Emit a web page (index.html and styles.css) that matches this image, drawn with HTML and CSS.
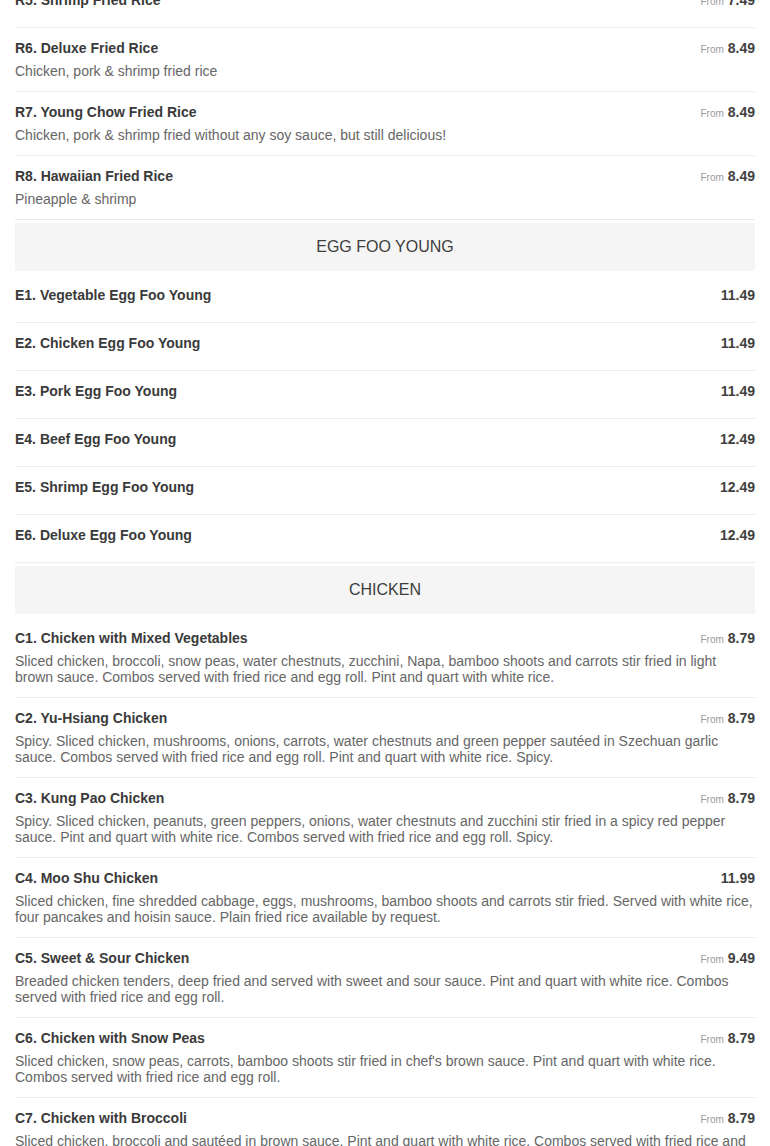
FILE: index.html
```html
<!DOCTYPE html>
<html lang="en">
<head>
<meta charset="utf-8">
<title>Menu</title>
<link rel="stylesheet" href="styles.css">
</head>
<body>
<div class="menu">
  <section class="section">
    <div class="item">
      <div class="row"><span class="name">R5. Shrimp Fried Rice</span><span class="price"><span class="from">From</span> 7.49</span></div>
    </div>
    <div class="item">
      <div class="row"><span class="name">R6. Deluxe Fried Rice</span><span class="price"><span class="from">From</span> 8.49</span></div>
      <p class="desc">Chicken, pork &amp; shrimp fried rice</p>
    </div>
    <div class="item">
      <div class="row"><span class="name">R7. Young Chow Fried Rice</span><span class="price"><span class="from">From</span> 8.49</span></div>
      <p class="desc">Chicken, pork &amp; shrimp fried without any soy sauce, but still delicious!</p>
    </div>
    <div class="item">
      <div class="row"><span class="name">R8. Hawaiian Fried Rice</span><span class="price"><span class="from">From</span> 8.49</span></div>
      <p class="desc">Pineapple &amp; shrimp</p>
    </div>
  </section>

  <section class="section">
    <h2 class="section-title">EGG FOO YOUNG</h2>
    <div class="item"><div class="row"><span class="name">E1. Vegetable Egg Foo Young</span><span class="price">11.49</span></div></div>
    <div class="item"><div class="row"><span class="name">E2. Chicken Egg Foo Young</span><span class="price">11.49</span></div></div>
    <div class="item"><div class="row"><span class="name">E3. Pork Egg Foo Young</span><span class="price">11.49</span></div></div>
    <div class="item"><div class="row"><span class="name">E4. Beef Egg Foo Young</span><span class="price">12.49</span></div></div>
    <div class="item"><div class="row"><span class="name">E5. Shrimp Egg Foo Young</span><span class="price">12.49</span></div></div>
    <div class="item"><div class="row"><span class="name">E6. Deluxe Egg Foo Young</span><span class="price">12.49</span></div></div>
  </section>

  <section class="section">
    <h2 class="section-title">CHICKEN</h2>
    <div class="item">
      <div class="row"><span class="name">C1. Chicken with Mixed Vegetables</span><span class="price"><span class="from">From</span> 8.79</span></div>
      <p class="desc">Sliced chicken, broccoli, snow peas, water chestnuts, zucchini, Napa, bamboo shoots and carrots stir fried in light brown sauce. Combos served with fried rice and egg roll. Pint and quart with white rice.</p>
    </div>
    <div class="item">
      <div class="row"><span class="name">C2. Yu-Hsiang Chicken</span><span class="price"><span class="from">From</span> 8.79</span></div>
      <p class="desc">Spicy. Sliced chicken, mushrooms, onions, carrots, water chestnuts and green pepper sautéed in Szechuan garlic sauce. Combos served with fried rice and egg roll. Pint and quart with white rice. Spicy.</p>
    </div>
    <div class="item">
      <div class="row"><span class="name">C3. Kung Pao Chicken</span><span class="price"><span class="from">From</span> 8.79</span></div>
      <p class="desc">Spicy. Sliced chicken, peanuts, green peppers, onions, water chestnuts and zucchini stir fried in a spicy red pepper sauce. Pint and quart with white rice. Combos served with fried rice and egg roll. Spicy.</p>
    </div>
    <div class="item">
      <div class="row"><span class="name">C4. Moo Shu Chicken</span><span class="price">11.99</span></div>
      <p class="desc">Sliced chicken, fine shredded cabbage, eggs, mushrooms, bamboo shoots and carrots stir fried. Served with white rice, four pancakes and hoisin sauce. Plain fried rice available by request.</p>
    </div>
    <div class="item">
      <div class="row"><span class="name">C5. Sweet &amp; Sour Chicken</span><span class="price"><span class="from">From</span> 9.49</span></div>
      <p class="desc">Breaded chicken tenders, deep fried and served with sweet and sour sauce. Pint and quart with white rice. Combos served with fried rice and egg roll.</p>
    </div>
    <div class="item">
      <div class="row"><span class="name">C6. Chicken with Snow Peas</span><span class="price"><span class="from">From</span> 8.79</span></div>
      <p class="desc">Sliced chicken, snow peas, carrots, bamboo shoots stir fried in chef's brown sauce. Pint and quart with white rice. Combos served with fried rice and egg roll.</p>
    </div>
    <div class="item">
      <div class="row"><span class="name">C7. Chicken with Broccoli</span><span class="price"><span class="from">From</span> 8.79</span></div>
      <p class="desc">Sliced chicken, broccoli and sautéed in brown sauce. Pint and quart with white rice. Combos served with fried rice and egg roll.</p>
    </div>
  </section>
</div>
</body>
</html>
```

FILE: styles.css
```css
* { box-sizing: border-box; }
html, body {
  margin: 0;
  padding: 0;
  background: #fff;
  overflow: hidden;
}
body {
  font-family: "Liberation Sans", Arial, sans-serif;
  color: #333;
}
.menu {
  padding: 0 15px;
  margin-top: -20px;
}
.section-title {
  margin: 3px 0 4px;
  height: 48px;
  background: #f5f5f5;
  font-size: 16px;
  font-weight: normal;
  color: #3d3d3d;
  display: flex;
  align-items: center;
  justify-content: center;
}
.item {
  padding: 10px 0 12px;
  border-bottom: 1px solid #ebebeb;
}
.row {
  display: flex;
  justify-content: space-between;
  align-items: center;
  height: 20px;
  margin-bottom: 5px;
}
.name {
  font-size: 14px;
  line-height: 20px;
  font-weight: bold;
  color: #3a3a3a;
}
.price {
  font-size: 14px;
  line-height: 20px;
  font-weight: bold;
  color: #3f3f3f;
  white-space: nowrap;
}
.from {
  font-size: 10px;
  line-height: 1;
  font-weight: normal;
  color: #9a9a9a;
}
.desc {
  margin: 0;
  font-size: 14px;
  line-height: 16px;
  color: #666;
}
```
